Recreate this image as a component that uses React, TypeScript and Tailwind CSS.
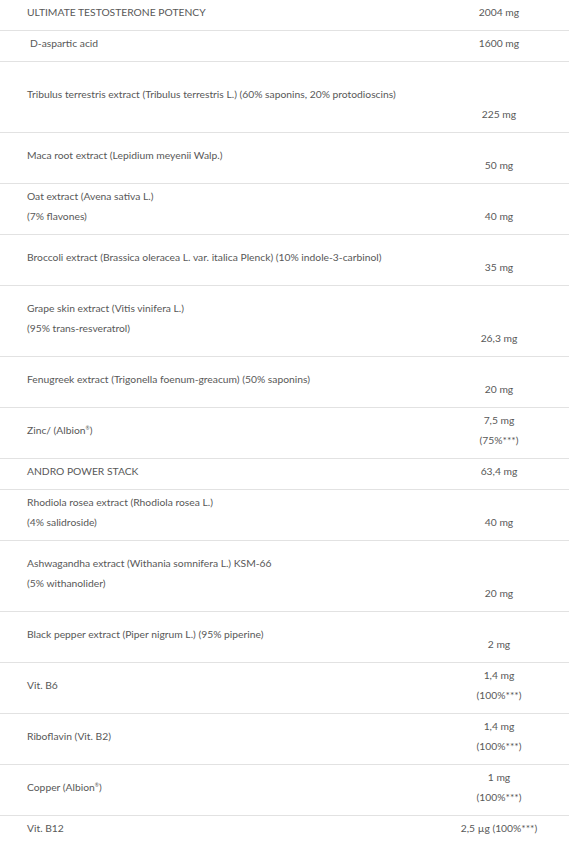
import React from 'react'

type Row = {
  name: React.ReactNode[]
  amount: React.ReactNode[]
  indent?: boolean
}

const albion = (
  <>
    Albion<sup className="text-[5px] relative -top-[4px]">®</sup>
  </>
)

const rows: Row[] = [
  { name: ['ULTIMATE TESTOSTERONE POTENCY'], amount: ['2004 mg'] },
  { name: ['D-aspartic acid'], amount: ['1600 mg'], indent: true },
  {
    name: ['Tribulus terrestris extract (Tribulus terrestris L.) (60% saponins, 20% protodioscins)'],
    amount: ['', '', '225 mg'],
  },
  { name: ['Maca root extract (Lepidium meyenii Walp.)'], amount: ['', '50 mg'] },
  { name: ['Oat extract (Avena sativa L.)', '(7% flavones)'], amount: ['', '40 mg'] },
  {
    name: ['Broccoli extract (Brassica oleracea L. var. italica Plenck) (10% indole-3-carbinol)'],
    amount: ['', '35 mg'],
  },
  { name: ['Grape skin extract (Vitis vinifera L.)', '(95% trans-resveratrol)'], amount: ['', '', '26,3 mg'] },
  { name: ['Fenugreek extract (Trigonella foenum-greacum) (50% saponins)'], amount: ['', '20 mg'] },
  { name: [<>Zinc/ ({albion})</>], amount: ['7,5 mg', '(75%***)'] },
  { name: ['ANDRO POWER STACK'], amount: ['63,4 mg'] },
  { name: ['Rhodiola rosea extract (Rhodiola rosea L.)', '(4% salidroside)'], amount: ['', '40 mg'] },
  {
    name: ['Ashwagandha extract (Withania somnifera L.) KSM-66', '(5% withanolider)'],
    amount: ['', '', '20 mg'],
  },
  { name: ['Black pepper extract (Piper nigrum L.) (95% piperine)'], amount: ['', '2 mg'] },
  { name: ['Vit. B6'], amount: ['1,4 mg', '(100%***)'] },
  { name: ['Riboflavin (Vit. B2)'], amount: ['1,4 mg', '(100%***)'] },
  { name: [<>Copper ({albion})</>], amount: ['1 mg', '(100%***)'] },
  { name: ['Vit. B12'], amount: ['2,5 µg (100%***)'] },
]

const App: React.FC = () => {
  return (
    <div className="bg-white w-[572px] min-h-[847px] text-[#585858] text-[10.3px] leading-[20px] font-['Lato',sans-serif]">
      <div className="w-[569px]">
        {rows.map((row, i) => (
          <div
            key={i}
            className={`flex ${i < rows.length - 1 ? 'border-b border-[#e2e2e2]' : ''}`}
          >
            {/* name column */}
            <div className="flex-1 flex flex-col justify-center pl-[27px] pt-[2px] pb-[8px]">
              {row.name.map((line, j) => (
                <div key={j} className={row.indent ? 'pl-[3px]' : ''}>
                  {line}
                </div>
              ))}
            </div>
            {/* amount column */}
            <div className="w-[140px] flex flex-col text-center pt-[2px] pb-[8px]">
              {row.amount.map((line, j) => (
                <div key={j} className="h-[20px]">
                  {line}
                </div>
              ))}
            </div>
          </div>
        ))}
      </div>
    </div>
  )
}

export default App
